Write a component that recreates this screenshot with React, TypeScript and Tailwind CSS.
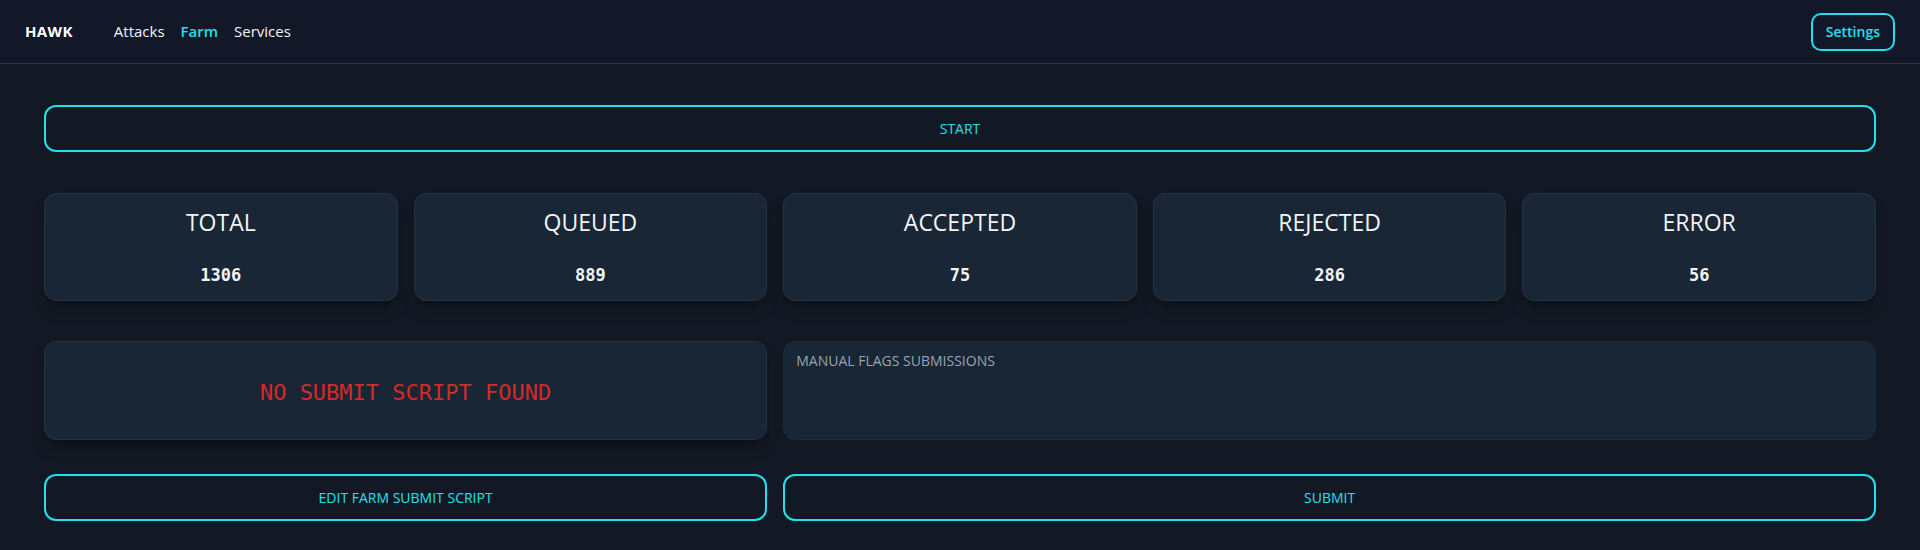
import React, { useState } from 'react';

const stats = [
  { label: 'TOTAL', value: 1306 },
  { label: 'QUEUED', value: 889 },
  { label: 'ACCEPTED', value: 75 },
  { label: 'REJECTED', value: 286 },
  { label: 'ERROR', value: 56 },
];

const sans = "font-['Open_Sans','Noto_Sans',sans-serif]";
const mono = "font-['DejaVu_Sans_Mono','Liberation_Mono',monospace]";

const App = () => {
  const [flags, setFlags] = useState('');
  return (
    <div className={`min-h-screen bg-[#131924] text-gray-100 ${sans}`}>
      {/* navbar */}
      <nav className="flex h-[64px] items-center justify-between border-b border-[#2e3440] bg-[#121828] pl-[25px] pr-[25px]">
        <div className="flex items-center">
          <span className="text-[15px] font-bold tracking-wide text-white">HAWK</span>
          <div className="ml-[41px] flex items-center gap-4 text-[15px]">
            <a className="text-gray-100">Attacks</a>
            <a className="font-semibold text-[#22e1ee]">Farm</a>
            <a className="text-gray-100">Services</a>
          </div>
        </div>
        <button className="h-[38px] rounded-[10px] border-2 border-[#22e1ee] px-[13px] text-[14px] font-semibold text-[#22e1ee]">
          Settings
        </button>
      </nav>

      <main className="px-[44px]">
        <button className="mt-[41px] h-[47px] w-full rounded-[12px] border-2 border-[#22e1ee] text-[14px] text-[#22e1ee]">
          START
        </button>

        <div className="mt-[41px] grid grid-cols-5 gap-4">
          {stats.map((s) => (
            <div
              key={s.label}
              className="flex h-[108px] flex-col items-center rounded-[12px] border border-[#243244] bg-[#192636] pt-[12px] shadow-lg shadow-black/30"
            >
              <span className="text-[23px] leading-[32px] text-gray-100">{s.label}</span>
              <span className={`mt-[25px] text-[17px] font-bold text-gray-100 ${mono}`}>{s.value}</span>
            </div>
          ))}
        </div>

        <div className="mt-[40px] grid grid-cols-5 gap-4">
          <div className="col-span-2 flex h-[99px] items-center justify-center rounded-[12px] border border-[#243244] bg-[#192636] pt-[4px] shadow-lg shadow-black/30">
            <span className={`text-[22px] text-[#d42a2a] ${mono}`}>NO SUBMIT SCRIPT FOUND</span>
          </div>
          <textarea
            value={flags}
            onChange={(e) => setFlags(e.target.value)}
            placeholder="MANUAL FLAGS SUBMISSIONS"
            className="col-span-3 h-[99px] resize-none rounded-[12px] border border-[#1d2a3a] bg-[#192636] px-[12px] py-[8px] text-[14px] text-gray-200 outline-none placeholder:text-[#9aa3b0]"
          />
        </div>

        <div className="mt-[34px] grid grid-cols-5 gap-4">
          <button className="col-span-2 h-[47px] rounded-[12px] border-2 border-[#22e1ee] text-[14px] text-[#22e1ee]">
            EDIT FARM SUBMIT SCRIPT
          </button>
          <button className="col-span-3 h-[47px] rounded-[12px] border-2 border-[#22e1ee] text-[14px] text-[#22e1ee]">
            SUBMIT
          </button>
        </div>
      </main>
    </div>
  );
};

export default App;
